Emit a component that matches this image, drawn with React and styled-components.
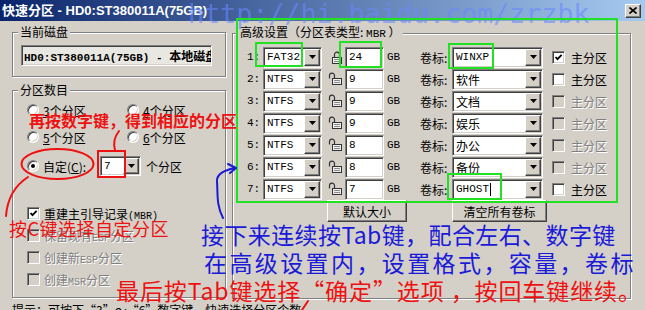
import React from "react";
import styled, { createGlobalStyle, css } from "styled-components";

const FACE = "#d4d0c8";
const CJK = `"Noto Sans CJK SC", "Noto Sans", sans-serif`;
const MONO = `"Liberation Mono", "Noto Sans CJK SC", monospace`;

const GlobalStyle = createGlobalStyle`
  html, body { margin: 0; padding: 0; background: ${FACE}; }
  * { box-sizing: border-box; }
`;

const sunken = css`
  border: 1px solid;
  border-color: #808080 #ffffff #ffffff #808080;
  box-shadow: inset 1px 1px 0 #404040, inset -1px -1px 0 ${FACE};
`;
const raised = css`
  border: 1px solid;
  border-color: #ffffff #404040 #404040 #ffffff;
  box-shadow: inset -1px -1px 0 #808080, inset 1px 1px 0 ${FACE};
`;

const Window = styled.div`
  position: relative;
  width: 645px;
  height: 310px;
  overflow: hidden;
  background: ${FACE};
  font-family: ${CJK};
  font-size: 12px;
  color: #000;
`;

const TitleBar = styled.div`
  height: 21px;
  display: flex;
  align-items: center;
  justify-content: space-between;
  padding: 0 4px 0 2px;
  background: linear-gradient(to right, #0a246a, #a6caf0);
  color: #fff;
`;
const Title = styled.div`
  font-family: "Liberation Sans", "Noto Sans CJK SC", sans-serif;
  font-weight: bold;
  font-size: 13px;
  line-height: 15px;
  white-space: nowrap;
`;
const CloseButton = styled.div`
  ${raised};
  width: 16px;
  height: 14px;
  background: ${FACE};
  display: flex;
  align-items: center;
  justify-content: center;
`;

const Body = styled.div`
  display: flex;
  align-items: flex-start;
  gap: 6px;
  padding: 4px 0 0 12px;
`;
const LeftColumn = styled.div`
  display: flex;
  flex-direction: column;
  gap: 6px;
`;
const Group = styled.fieldset`
  margin: 0;
  padding: 0;
  min-width: 0;
  width: ${(p) => p.$w}px;
  height: ${(p) => p.$h}px;
  border: 1px solid #808080;
  box-shadow: 1px 1px 0 #ffffff, inset 1px 1px 0 #ffffff;
`;
const Legend = styled.legend`
  margin-left: 5px;
  padding: 0 2px;
  font-size: 12px;
  line-height: 14px;
  background: ${FACE};
  white-space: nowrap;
`;
const GroupInner = styled.div`
  padding: ${(p) => p.$pad};
`;
const Mono = styled.span`
  font-family: ${MONO};
  font-size: ${(p) => p.$s || 11}px;
`;
const CjkPart = styled.span`
  font-family: ${CJK};
  font-size: 12px;
`;

const DiskField = styled.div`
  ${sunken};
  width: 191px;
  height: 21px;
  padding: 1px 2px;
  background: #e9e7e2;
  font-family: ${MONO};
  font-weight: bold;
  font-size: 11px;
  line-height: 17px;
  white-space: nowrap;
  overflow: hidden;
`;

const RadioGrid = styled.div`
  display: grid;
  grid-template-columns: 100px 100px;
  grid-auto-rows: 20px;
  row-gap: 7px;
`;
const RadioItem = styled.div`
  display: flex;
  align-items: center;
  gap: 4px;
  white-space: nowrap;
  ${(p) => p.$w && `width: ${p.$w}px; flex: none;`}
`;
const RadioDot = styled.span`
  ${sunken};
  width: 12px;
  height: 12px;
  border-radius: 50%;
  background: #fff;
  flex: none;
  display: inline-flex;
  align-items: center;
  justify-content: center;
  &::after {
    content: "";
    display: ${(p) => (p.$on ? "block" : "none")};
    width: 4px;
    height: 4px;
    border-radius: 50%;
    background: #000;
  }
`;
const CustomRow = styled.div`
  display: flex;
  align-items: center;
  height: 20px;
  margin-top: 9px;
`;
const UnitText = styled.span`
  margin-left: 5px;
  white-space: nowrap;
`;
const CheckList = styled.div`
  display: grid;
  grid-auto-rows: 22px;
  align-items: center;
  margin-top: 26px;
`;
const CheckItem = styled.div`
  display: flex;
  align-items: center;
  gap: 4px;
  white-space: nowrap;
  color: ${(p) => (p.$disabled ? "#808080" : "#000")};
  text-shadow: ${(p) => (p.$disabled ? "1px 1px 0 #fff" : "none")};
`;
const CheckBox = styled.span`
  ${sunken};
  width: 13px;
  height: 13px;
  flex: none;
  background: ${(p) => (p.$disabled ? FACE : "#fff")};
  display: inline-flex;
  align-items: center;
  justify-content: center;
`;

const ComboBox = styled.div`
  ${sunken};
  width: ${(p) => p.$w}px;
  height: ${(p) => p.$h}px;
  padding: 1px;
  background: #fff;
  display: flex;
  align-items: stretch;
  flex: none;
`;
const ComboValue = styled.span`
  flex: 1;
  display: flex;
  align-items: center;
  padding-left: 2px;
  white-space: nowrap;
  overflow: hidden;
  font-family: ${(p) => (p.$mono ? MONO : CJK)};
  font-size: ${(p) => (p.$mono ? 11 : 12)}px;
`;
const Caret = styled.span`
  display: inline-block;
  width: 1px;
  height: 13px;
  background: #000;
  margin-left: 1px;
`;
const DropButton = styled.span`
  ${raised};
  width: 16px;
  flex: none;
  background: ${FACE};
  display: flex;
  align-items: center;
  justify-content: center;
`;

const PartGrid = styled.div`
  display: grid;
  grid-template-columns: 16px 59px 23px 39px 36px 32px 91px 25px auto;
  grid-auto-rows: 22px;
  align-items: center;
  white-space: nowrap;
`;
const RowNum = styled.span`
  font-family: ${MONO};
  font-size: 11px;
`;
const LockCell = styled.span`
  display: flex;
  justify-content: flex-end;
  padding-right: 2px;
`;
const SizeField = styled.div`
  ${sunken};
  height: 21px;
  padding: 2px 3px;
  background: #fff;
  font-family: ${MONO};
  font-size: 11px;
  line-height: 14px;
`;
const Unit = styled.span`
  padding-left: 3px;
  font-family: ${MONO};
  font-size: 11px;
`;
const CheckCell = styled.span`
  display: flex;
  padding-left: 9px;
`;
const PrimaryLabel = styled.span`
  padding-left: 3px;
  color: ${(p) => (p.$disabled ? "#808080" : "#000")};
  text-shadow: ${(p) => (p.$disabled ? "1px 1px 0 #fff" : "none")};
`;
const ButtonRow = styled.div`
  display: flex;
  gap: 45px;
  padding-left: 80px;
`;
const Button = styled.div`
  ${raised};
  width: ${(p) => p.$w}px;
  height: 22px;
  background: ${FACE};
  display: flex;
  align-items: center;
  justify-content: center;
  white-space: nowrap;
`;

const Hint = styled.div`
  padding: 4px 0 0 12px;
  line-height: 14px;
  white-space: nowrap;
`;

const Overlay = styled.div`
  position: absolute;
  inset: 0;
  pointer-events: none;
`;
const Note = styled.div`
  position: absolute;
  left: ${(p) => p.$x}px;
  top: ${(p) => p.$y}px;
  color: ${(p) => p.$c};
  font-family: ${(p) => p.$font || CJK};
  font-size: ${(p) => p.$s}px;
  font-weight: ${(p) => p.$w || 400};
  letter-spacing: ${(p) => p.$ls || 0}px;
  line-height: 1;
  white-space: nowrap;
`;
const Drawing = styled.svg`
  position: absolute;
  left: 0;
  top: 0;
`;

const Arrow = () => (
  <svg width="7" height="4" viewBox="0 0 7 4">
    <polygon points="0,0 7,0 3.5,4" fill="#000" />
  </svg>
);
const Check = () => (
  <svg width="9" height="9" viewBox="0 0 9 9">
    <polyline points="1.5,4 3.5,6.2 7.6,1.8" fill="none" stroke="#000" strokeWidth="1.8" />
  </svg>
);
const LockClosed = () => (
  <svg width="12" height="15" viewBox="0 0 12 15">
    <path d="M3.5 7.5V4.6a2.5 2.5 0 0 1 5 0V7.5" fill="none" stroke="#333" strokeWidth="1.2" />
    <rect x="1.5" y="7.5" width="9" height="6" fill="#eeeeee" stroke="#333" />
    <path d="M3 9.5h6M3 11.5h6" stroke="#8a8a8a" />
  </svg>
);
const LockOpen = () => (
  <svg width="15" height="14" viewBox="0 0 15 14">
    <path d="M1.5 6.5V3.6a2.5 2.5 0 0 1 5 0V6.5" fill="none" stroke="#333" strokeWidth="1.2" />
    <rect x="4.5" y="6.5" width="9" height="6" fill="#eeeeee" stroke="#333" />
    <path d="M6 8.5h6M6 10.5h6" stroke="#8a8a8a" />
  </svg>
);

const Combo = ({ w, h = 21, value, mono, caret }) => (
  <ComboBox $w={w} $h={h}>
    <ComboValue $mono={mono}>
      {value}
      {caret && <Caret />}
    </ComboValue>
    <DropButton>
      <Arrow />
    </DropButton>
  </ComboBox>
);

const rows = [
  { fs: "FAT32", locked: true, size: "24", label: "WINXP", mono: true, checked: true },
  { fs: "NTFS", size: "9", label: "软件" },
  { fs: "NTFS", size: "9", label: "文档", disabled: true },
  { fs: "NTFS", size: "9", label: "娱乐", disabled: true },
  { fs: "NTFS", size: "8", label: "办公", disabled: true },
  { fs: "NTFS", size: "8", label: "备份", disabled: true },
  { fs: "NTFS", size: "7", label: "GHOST", mono: true, caret: true },
];

const GREEN = "#22e022";
const RED = "#ee1111";
const BLUE = "#1a1ad8";

export default function App() {
  return (
    <>
      <GlobalStyle />
      <Window>
        <TitleBar>
          <Title>快速分区 - HD0:ST380011A(75GB)</Title>
          <CloseButton>
            <svg width="8" height="7" viewBox="0 0 8 7">
              <path d="M0.5 0.5L7.5 6.5M7.5 0.5L0.5 6.5" stroke="#000" strokeWidth="1.6" />
            </svg>
          </CloseButton>
        </TitleBar>

        <Body>
          <LeftColumn>
            <Group $w={214} $h={52}>
              <Legend>当前磁盘</Legend>
              <GroupInner $pad="6px 0 0 8px">
                <DiskField>
                  HD0:ST380011A(75GB) - <CjkPart>本地磁盘</CjkPart>
                </DiskField>
              </GroupInner>
            </Group>

            <Group $w={214} $h={215}>
              <Legend>分区数目</Legend>
              <GroupInner $pad="3px 0 0 14px">
                <RadioGrid>
                  <RadioItem>
                    <RadioDot />
                    <span><u>3</u>个分区</span>
                  </RadioItem>
                  <RadioItem>
                    <RadioDot />
                    <span><u>4</u>个分区</span>
                  </RadioItem>
                  <RadioItem>
                    <RadioDot />
                    <span><u>5</u>个分区</span>
                  </RadioItem>
                  <RadioItem>
                    <RadioDot />
                    <span><u>6</u>个分区</span>
                  </RadioItem>
                </RadioGrid>
                <CustomRow>
                  <RadioItem $w={73}>
                    <RadioDot $on />
                    <span>自定(<u>C</u>):</span>
                  </RadioItem>
                  <Combo w={41} h={20} value="7" mono />
                  <UnitText>个分区</UnitText>
                </CustomRow>
                <CheckList>
                  <CheckItem>
                    <CheckBox><Check /></CheckBox>
                    <span>重建主引导记录<Mono $s={10}>(MBR)</Mono></span>
                  </CheckItem>
                  <CheckItem $disabled>
                    <CheckBox $disabled />
                    <span>保留现有<Mono $s={10}>ESP</Mono>分区</span>
                  </CheckItem>
                  <CheckItem $disabled>
                    <CheckBox $disabled />
                    <span>创建新<Mono $s={10}>ESP</Mono>分区</span>
                  </CheckItem>
                  <CheckItem $disabled>
                    <CheckBox $disabled />
                    <span>创建<Mono $s={10}>MSR</Mono>分区</span>
                  </CheckItem>
                </CheckList>
              </GroupInner>
            </Group>
          </LeftColumn>

          <Group $w={399} $h={274}>
            <Legend>
              高级设置（分区表类型: <Mono>MBR</Mono> ）
            </Legend>
            <GroupInner $pad="5px 0 0 14px">
              <PartGrid>
                {rows.map((r, i) => (
                  <React.Fragment key={i}>
                    <RowNum>{i + 1}:</RowNum>
                    <Combo w={59} value={r.fs} mono />
                    <LockCell>{r.locked ? <LockClosed /> : <LockOpen />}</LockCell>
                    <SizeField>{r.size}</SizeField>
                    <Unit>GB</Unit>
                    <span>卷标:</span>
                    <Combo w={91} value={r.label} mono={r.mono} caret={r.caret} />
                    <CheckCell>
                      <CheckBox $disabled={r.disabled}>{r.checked && <Check />}</CheckBox>
                    </CheckCell>
                    <PrimaryLabel $disabled={r.disabled}>主分区</PrimaryLabel>
                  </React.Fragment>
                ))}
              </PartGrid>
              <ButtonRow>
                <Button $w={80}>默认大小</Button>
                <Button $w={95}>清空所有卷标</Button>
              </ButtonRow>
            </GroupInner>
          </Group>
        </Body>

        <Hint>提示：可按下“3”～“6”数字键，快速选择分区个数。</Hint>

        <Overlay>
          <Note $x={188} $y={0} $c="rgba(105,135,255,0.62)" $font={`"DejaVu Sans Mono", monospace`} $s={27} $ls={-0.2}>
            http://hi.baidu.com/zrzbk
          </Note>
          <Drawing width="645" height="310" viewBox="0 0 645 310">
            <g fill="none" stroke={GREEN} strokeWidth="2">
              <rect x="237" y="19" width="380" height="183" />
              <rect x="256" y="43" width="46" height="23" />
              <rect x="340" y="42" width="41" height="25" />
              <rect x="449" y="44" width="44" height="24" />
              <rect x="448" y="174" width="53" height="25" />
            </g>
            <g fill="none" stroke={RED} strokeWidth="2" strokeLinecap="round">
              <rect x="98" y="151" width="27" height="26" />
              <ellipse cx="57.5" cy="164" rx="36" ry="15" />
              <path d="M115 150 Q112 140 119 131" />
              <path d="M28 177 Q8 190 6 216" />
              <path d="M302 310 L308 301" />
            </g>
            <g fill="none" stroke={BLUE} strokeWidth="2" strokeLinecap="round" strokeLinejoin="round">
              <path d="M223 218 C216 205 218 192 217 182 C216 174 225 170 235 168" />
              <path d="M228 164 L236 168 L230 173" />
            </g>
          </Drawing>
          <Note $x={29} $y={112} $c={RED} $s={16} $w={700}>
            再按数字键，得到相应的分区
          </Note>
          <Note $x={9} $y={219} $c={RED} $s={18} $ls={0.5}>
            按C键选择自定分区
          </Note>
          <Note $x={201} $y={223} $c={BLUE} $s={23} $ls={0.4}>
            接下来连续按Tab键，配合左右、数字键
          </Note>
          <Note $x={204} $y={251} $c={BLUE} $s={23} $ls={2.4}>
            在高级设置内，设置格式，容量，卷标
          </Note>
          <Note $x={116} $y={279} $c={RED} $s={23} $ls={0.9}>
            最后按Tab键选择“确定”选项 ，按回车键继续。
          </Note>
        </Overlay>
      </Window>
    </>
  );
}
